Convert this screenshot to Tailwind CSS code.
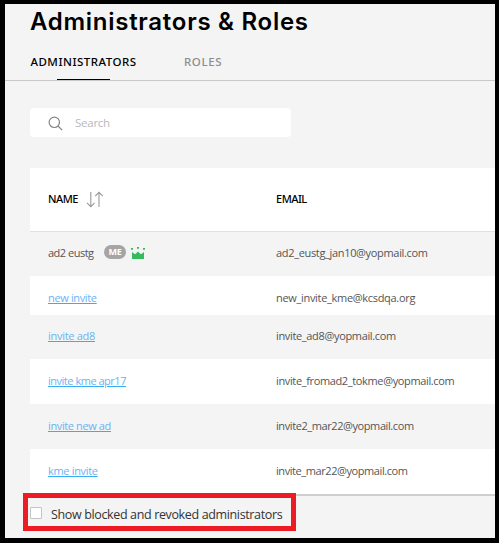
<!DOCTYPE html>
<html lang="en">
<head>
<meta charset="utf-8">
<title>Administrators &amp; Roles</title>
<script src="https://cdn.jsdelivr.net/npm/@tailwindcss/browser@4"></script>
</head>
<body class="h-[543px] w-[499px] overflow-hidden bg-black pt-1 pr-1 pb-[5px] pl-[5px] font-['Open_Sans',sans-serif]">
<main class="relative h-full bg-[#f4f4f4]">
  <header class="flex h-[77px] flex-col border-b border-[#c8c8c8] pl-[25px]">
    <h1 class="h-[44px] pt-[2px] font-['Inter',sans-serif] text-[24px] leading-[32px] font-semibold tracking-[0.72px] whitespace-nowrap text-black">Administrators &amp; Roles</h1>
    <nav class="flex flex-1 gap-[47px] font-['Noto_Sans',sans-serif] text-[11.5px] leading-[16px] font-medium whitespace-nowrap">
      <a class="flex w-[107px] flex-col items-center justify-between pt-[6px] text-black"><span class="tracking-[0.5px]">ADMINISTRATORS</span><span class="h-px w-[53px] bg-black"></span></a>
      <a class="pt-[6px] tracking-[0.6px] text-[#8c8c8c]">ROLES</a>
    </nav>
  </header>

  <div class="mt-[27px] ml-[25px] flex h-[29px] w-[261px] items-center rounded bg-white pl-[18px]">
    <svg class="mt-[2px] h-[15px] w-[15px]" viewBox="0 0 15 15" fill="none" stroke="#858585" stroke-width="1.2"><circle cx="6.3" cy="6.3" r="5.2"/><path d="M10 10l4.2 4.2"/></svg>
    <span class="ml-3 text-[11.5px] leading-[16px] tracking-[-0.25px] text-[#b9b9b9]">Search</span>
  </div>

  <section class="mt-[31px] ml-[25px] text-[11px] leading-[16px] whitespace-nowrap text-[#555]">
    <div class="grid h-16 grid-cols-[228px_1fr] border-b border-[#e0e0e0] bg-white pt-[23px] pl-[18px] font-['Noto_Sans',sans-serif] font-medium text-black">
      <div class="flex"><span class="w-[38px] tracking-[-0.55px]">NAME</span><svg class="h-[17px] w-[18px]" viewBox="0 0 18 17" fill="none" stroke="#999" stroke-width="1.1"><path d="M4.8 1v14.5M1 11.8l3.8 3.8 3.8-3.8M13 16V1.3M9.200 5.1L13 1.300l3.800 3.800"/></svg></div>
      <span class="tracking-[-0.5px]">EMAIL</span>
    </div>
    <div class="grid h-11 grid-cols-[228px_1fr] pt-[13px] pl-[18px]">
      <div class="flex"><span class="w-[56px] tracking-[-0.5px]">ad2 eustg</span><span class="flex h-[14px] w-[22px] items-center justify-center rounded-full bg-[#a5a5a5] text-[9px] font-bold tracking-[-0.2px] text-white">ME</span><svg class="mt-[2px] ml-[5px] h-[13px] w-[14px]" viewBox="0 0 14 13" fill="#35bb5e"><path d="M1 12V5l3 2.300L5.500 6 7 4.500 8.500 6 10 7.300 13 5v7z"/><path d="M0 1h2v1.800H0zM6 0h2v1.800H6zM12 1h2v1.800h-2z"/></svg></div>
      <span class="tracking-[-0.33px]">ad2_eustg_jan10@yopmail.com</span>
    </div>
    <div class="grid h-[39px] grid-cols-[228px_1fr] bg-white pt-[14px] pl-[18px]">
      <div><a class="tracking-[-0.35px] text-[#6bb3f3] underline decoration-[#35aef5] decoration-1 underline-offset-1">new invite</a></div>
      <span class="tracking-[-0.31px]">new_invite_kme@kcsdqa.org</span>
    </div>
    <div class="grid h-11 grid-cols-[228px_1fr] pt-[13px] pl-[18px]">
      <div><a class="tracking-[-0.29px] text-[#6bb3f3] underline decoration-[#35aef5] decoration-1 underline-offset-1">invite ad8</a></div>
      <span class="tracking-[-0.34px]">invite_ad8@yopmail.com</span>
    </div>
    <div class="grid h-[45px] grid-cols-[228px_1fr] bg-white pt-[14px] pl-[18px]">
      <div><a class="tracking-[-0.48px] text-[#6bb3f3] underline decoration-[#35aef5] decoration-1 underline-offset-1">invite kme apr17</a></div>
      <span class="tracking-[-0.36px]">invite_fromad2_tokme@yopmail.com</span>
    </div>
    <div class="grid h-[45px] grid-cols-[228px_1fr] pt-[14px] pl-[18px]">
      <div><a class="tracking-[-0.38px] text-[#6bb3f3] underline decoration-[#35aef5] decoration-1 underline-offset-1">invite new ad</a></div>
      <span class="tracking-[-0.41px]">invite2_mar22@yopmail.com</span>
    </div>
    <div class="grid h-[47px] grid-cols-[228px_1fr] border-b-2 border-[#cfcfcf] bg-white pt-[14px] pl-[18px]">
      <div><a class="tracking-[-0.32px] text-[#6bb3f3] underline decoration-[#35aef5] decoration-1 underline-offset-1">kme invite</a></div>
      <span class="tracking-[-0.42px]">invite_mar22@yopmail.com</span>
    </div>
  </section>

  <label class="absolute top-[489px] left-[18px] flex h-[38px] w-[273px] items-center border-[5px] border-[#ed1c24] bg-[#f4f4f4] pl-[2px] text-[12.5px] leading-[18px] tracking-[-0.36px] whitespace-nowrap text-[#333]">
    <span class="mt-[2px] mr-[9px] h-[12px] w-[12px] rounded-[1px] border border-[#c4c4c4] bg-white"></span>
    <span class="mt-[6px]">Show blocked and revoked administrators</span>
  </label>
</main>
</body>
</html>
